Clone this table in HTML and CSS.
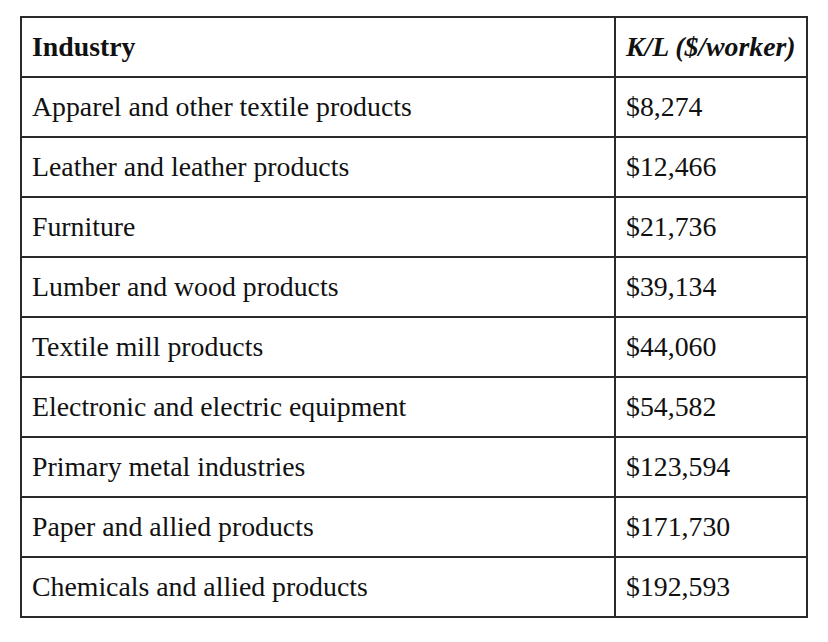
FILE: index.html
```html
<!DOCTYPE html>
<html>
<head>
<meta charset="utf-8">
<link rel="stylesheet" href="styles.css">
</head>
<body>
<table class="kl-table">
  <thead>
    <tr><th class="col-industry">Industry</th><th class="col-kl">K/L ($/worker)</th></tr>
  </thead>
  <tbody>
    <tr><td>Apparel and other textile products</td><td>$8,274</td></tr>
    <tr><td>Leather and leather products</td><td>$12,466</td></tr>
    <tr><td>Furniture</td><td>$21,736</td></tr>
    <tr><td>Lumber and wood products</td><td>$39,134</td></tr>
    <tr><td>Textile mill products</td><td>$44,060</td></tr>
    <tr><td>Electronic and electric equipment</td><td>$54,582</td></tr>
    <tr><td>Primary metal industries</td><td>$123,594</td></tr>
    <tr><td>Paper and allied products</td><td>$171,730</td></tr>
    <tr><td>Chemicals and allied products</td><td>$192,593</td></tr>
  </tbody>
</table>
</body>
</html>
```

FILE: styles.css
```css
html, body {
  margin: 0;
  padding: 0;
  background: #ffffff;
}
body {
  padding: 16px 0 0 20px;
  font-family: "Liberation Serif", "Times New Roman", serif;
  color: #111111;
}
.kl-table {
  border-collapse: collapse;
  border: 2px solid #222222;
  width: 788px;
  font-size: 27.8px;
}
.kl-table th,
.kl-table td {
  border: 2px solid #2a2a2a;
  height: 58px;
  padding: 0 10px;
  text-align: left;
  vertical-align: middle;
  font-weight: normal;
}
.kl-table th {
  font-weight: bold;
}
.kl-table .col-industry {
  width: 572px;
}
.kl-table .col-kl {
  font-style: italic;
}
```
